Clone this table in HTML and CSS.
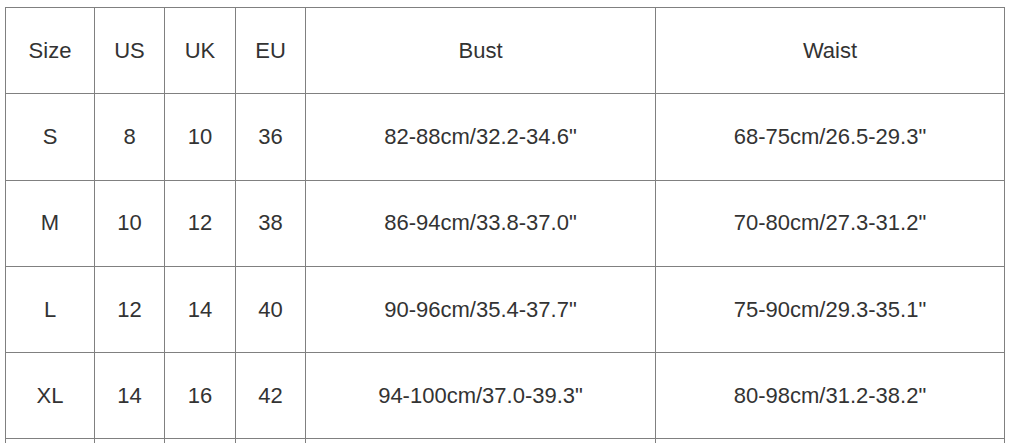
FILE: index.html
```html
<!DOCTYPE html>
<html>
<head>
<meta charset="utf-8">
<link rel="stylesheet" href="styles.css">
</head>
<body>
<table class="size-table">
  <colgroup>
    <col class="c-size"><col class="c-us"><col class="c-uk"><col class="c-eu"><col class="c-bust"><col class="c-waist">
  </colgroup>
  <tr><td>Size</td><td>US</td><td>UK</td><td>EU</td><td>Bust</td><td>Waist</td></tr>
  <tr><td>S</td><td>8</td><td>10</td><td>36</td><td>82-88cm/32.2-34.6"</td><td>68-75cm/26.5-29.3"</td></tr>
  <tr><td>M</td><td>10</td><td>12</td><td>38</td><td>86-94cm/33.8-37.0"</td><td>70-80cm/27.3-31.2"</td></tr>
  <tr><td>L</td><td>12</td><td>14</td><td>40</td><td>90-96cm/35.4-37.7"</td><td>75-90cm/29.3-35.1"</td></tr>
  <tr><td>XL</td><td>14</td><td>16</td><td>42</td><td>94-100cm/37.0-39.3"</td><td>80-98cm/31.2-38.2"</td></tr>
  <tr class="empty-row"><td></td><td></td><td></td><td></td><td></td><td></td></tr>
</table>
</body>
</html>
```
FILE: styles.css
```css
html, body {
  margin: 0;
  padding: 0;
  background: #fff;
}
body {
  padding: 7px 0 0 5px;
  font-family: "Liberation Sans", Arial, sans-serif;
  color: #333;
}
.size-table {
  border-collapse: collapse;
  table-layout: fixed;
  width: 999px;
}
.c-size { width: 89px; }
.c-us { width: 70px; }
.c-uk { width: 71px; }
.c-eu { width: 70px; }
.c-bust { width: 350px; }
.c-waist { width: 349px; }
.size-table td {
  border: 1px solid #808080;
  height: 85.3px;
  padding: 0;
  text-align: center;
  vertical-align: middle;
  font-size: 22px;
  line-height: 24px;
}
```
